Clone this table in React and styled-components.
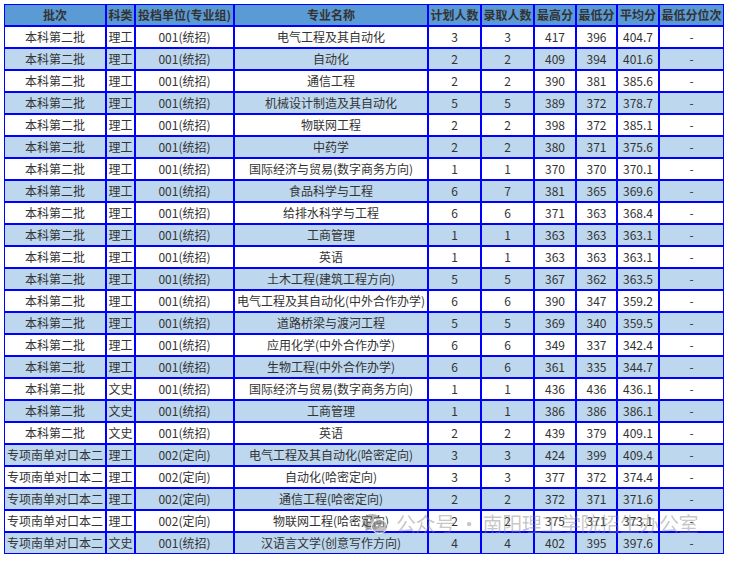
import React from "react";
import styled, { createGlobalStyle } from "styled-components";

const Global = createGlobalStyle`
  html, body { margin: 0; padding: 0; background: #fff; }
  body { font-family: "Noto Sans CJK SC", "Noto Sans", sans-serif; }
`;

const Page = styled.div`
  position: relative;
  padding: 4px;
  width: 729px;
  height: 561px;
  box-sizing: border-box;
`;

const Table = styled.table`
  border-collapse: separate;
  border-spacing: 0;
  table-layout: fixed;
  width: 720px;
  font-size: 12px;
  color: #333;
`;

const Cell = styled.td`
  box-sizing: border-box;
  border: 1px solid #0000ff;
  height: 22px;
  padding: 0;
  text-align: center;
  white-space: nowrap;
  overflow: hidden;
  line-height: 18px;
  background: ${(p) => (p.$alt ? "#bdd7ee" : "#fff")};
`;

const Head = styled.th`
  box-sizing: border-box;
  border: 1px solid #0000ff;
  height: 22px;
  padding: 0;
  text-align: center;
  white-space: nowrap;
  font-weight: 700;
  color: #333;
  background: #5b9bd5;
  width: ${(p) => p.$w}px;
  line-height: 18px;
`;

const Watermark = styled.div`
  position: absolute;
  left: 362px;
  top: 509px;
  display: flex;
  align-items: center;
  gap: 8px;
  color: rgba(128, 128, 128, 0.45);
  font-size: 20px;
  letter-spacing: -0.4px;
  pointer-events: none;
  font-family: "Noto Sans CJK SC", sans-serif;
`;

const cols = [
  ["批次", 102],
  ["科类", 29],
  ["投档单位(专业组)", 99],
  ["专业名称", 194],
  ["计划人数", 53],
  ["录取人数", 53],
  ["最高分", 42],
  ["最低分", 41],
  ["平均分", 42],
  ["最低分位次", 65],
];

const B = "本科第二批";
const Z = "专项南单对口本二";
const rows = [
  [B, "理工", "001(统招)", "电气工程及其自动化", 3, 3, 417, 396, "404.7"],
  [B, "理工", "001(统招)", "自动化", 2, 2, 409, 394, "401.6"],
  [B, "理工", "001(统招)", "通信工程", 2, 2, 390, 381, "385.6"],
  [B, "理工", "001(统招)", "机械设计制造及其自动化", 5, 5, 389, 372, "378.7"],
  [B, "理工", "001(统招)", "物联网工程", 2, 2, 398, 372, "385.1"],
  [B, "理工", "001(统招)", "中药学", 2, 2, 380, 371, "375.6"],
  [B, "理工", "001(统招)", "国际经济与贸易(数字商务方向)", 1, 1, 370, 370, "370.1"],
  [B, "理工", "001(统招)", "食品科学与工程", 6, 7, 381, 365, "369.6"],
  [B, "理工", "001(统招)", "给排水科学与工程", 6, 6, 371, 363, "368.4"],
  [B, "理工", "001(统招)", "工商管理", 1, 1, 363, 363, "363.1"],
  [B, "理工", "001(统招)", "英语", 1, 1, 363, 363, "363.1"],
  [B, "理工", "001(统招)", "土木工程(建筑工程方向)", 5, 5, 367, 362, "363.5"],
  [B, "理工", "001(统招)", "电气工程及其自动化(中外合作办学)", 6, 6, 390, 347, "359.2"],
  [B, "理工", "001(统招)", "道路桥梁与渡河工程", 5, 5, 369, 340, "359.5"],
  [B, "理工", "001(统招)", "应用化学(中外合作办学)", 6, 6, 349, 337, "342.4"],
  [B, "理工", "001(统招)", "生物工程(中外合作办学)", 6, 6, 361, 335, "344.7"],
  [B, "文史", "001(统招)", "国际经济与贸易(数字商务方向)", 1, 1, 436, 436, "436.1"],
  [B, "文史", "001(统招)", "工商管理", 1, 1, 386, 386, "386.1"],
  [B, "文史", "001(统招)", "英语", 2, 2, 439, 379, "409.1"],
  [Z, "理工", "002(定向)", "电气工程及其自动化(哈密定向)", 3, 3, 424, 399, "409.4"],
  [Z, "理工", "002(定向)", "自动化(哈密定向)", 3, 3, 377, 372, "374.4"],
  [Z, "理工", "002(定向)", "通信工程(哈密定向)", 2, 2, 372, 371, "371.6"],
  [Z, "理工", "002(定向)", "物联网工程(哈密定向)", 2, 2, 375, 371, "373.1"],
  [Z, "文史", "001(统招)", "汉语言文学(创意写作方向)", 4, 4, 402, 395, "397.6"],
];

const WeChatIcon = () => (
  <svg width="26" height="22" viewBox="0 0 26 22" aria-hidden="true">
    <ellipse cx="10" cy="9" rx="9.5" ry="8" fill="rgba(110,110,110,0.5)" />
    <path d="M4 14 L3 19 L8 15.5 Z" fill="rgba(110,110,110,0.5)" />
    <ellipse cx="17.5" cy="13.5" rx="8" ry="6.8" fill="rgba(140,140,140,0.55)" stroke="#fff" strokeWidth="1" />
    <path d="M22 18 L24 21.5 L19 19.5 Z" fill="rgba(140,140,140,0.55)" />
    <circle cx="7" cy="7" r="1.2" fill="#fff" />
    <circle cx="13" cy="7" r="1.2" fill="#fff" />
    <circle cx="15" cy="12.5" r="1" fill="#fff" />
    <circle cx="20" cy="12.5" r="1" fill="#fff" />
  </svg>
);

export default function App() {
  return (
    <>
      <Global />
      <Page>
        <Table>
          <thead>
            <tr>
              {cols.map(([t, w]) => (
                <Head key={t} $w={w}>{t}</Head>
              ))}
            </tr>
          </thead>
          <tbody>
            {rows.map((r, i) => (
              <tr key={i}>
                {r.map((v, j) => (
                  <Cell key={j} $alt={i % 2 === 1}>{v}</Cell>
                ))}
                <Cell $alt={i % 2 === 1}>-</Cell>
              </tr>
            ))}
          </tbody>
        </Table>
        <Watermark>
          <WeChatIcon />
          <span>公众号 · 南阳理工学院招生办公室</span>
        </Watermark>
      </Page>
    </>
  );
}
